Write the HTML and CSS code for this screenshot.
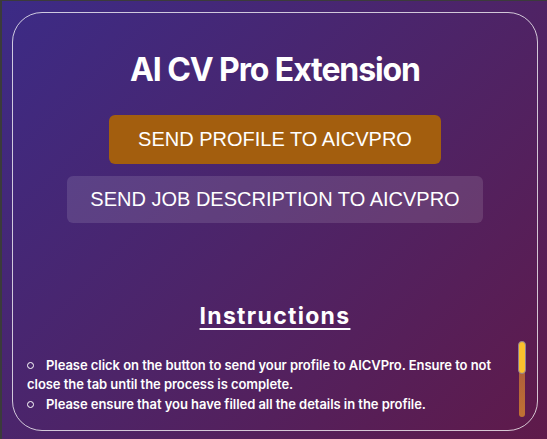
FILE: index.html
```html
<!DOCTYPE html>
<html lang="en">
<head>
<meta charset="utf-8">
<title>AI CV Pro Extension</title>
<link rel="stylesheet" href="styles.css">
</head>
<body>
<div class="frame">
  <main class="card">
    <h1 class="title">AI CV Pro Extension</h1>
    <button class="btn btn-profile">SEND PROFILE TO AICVPRO</button>
    <button class="btn btn-job">SEND JOB DESCRIPTION TO AICVPRO</button>
    <h2 class="subtitle">Instructions</h2>
    <div class="scroll">
      <ul class="steps">
        <li>Please click on the button to send your profile to AICVPro. Ensure to not close the tab until the process is complete.</li>
        <li>Please ensure that you have filled all the details in the profile.</li>
      </ul>
      <div class="scrollbar" aria-hidden="true"><div class="thumb"></div></div>
    </div>
  </main>
</div>
</body>
</html>
```
FILE: styles.css
```css
* { box-sizing: border-box; }
html, body { margin: 0; padding: 0; }
body { width: 547px; height: 439px; overflow: hidden; }

.frame {
  height: 439px;
  border-top: 1px solid #3b3b3b;
  border-left: 2px solid #3b3b3b;
  padding: 11px 9px 8px 10px;
  background: linear-gradient(135deg, #3c2b86 0%, #4d2468 50%, #5f1a4a 100%);
}

.card {
  height: 419px;
  border: 1px solid rgba(255, 255, 255, 0.75);
  border-radius: 30px;
  display: flex;
  flex-direction: column;
  align-items: center;
  color: #fff;
  font-family: Inter, "Noto Sans", sans-serif;
}

.title {
  margin: 41px 0 0;
  font-size: 32px;
  line-height: 32px;
  font-weight: 700;
  letter-spacing: -1.1px;
}

.btn {
  border: none;
  color: #fff;
  font-family: "Liberation Sans", Arial, sans-serif;
  font-size: 20px;
  line-height: 23px;
  border-radius: 6px;
  cursor: pointer;
}

.btn-profile {
  margin-top: 29px;
  padding: 13px 29px;
  background: #a35e0e;
}

.btn-job {
  margin-top: 12px;
  padding: 12px 23.5px;
  background: rgba(255, 255, 255, 0.12);
}

.subtitle {
  margin: 82px 0 0;
  font-size: 23px;
  line-height: 23px;
  font-weight: 700;
  letter-spacing: 1.3px;
  text-decoration: underline;
  text-decoration-thickness: 2px;
  text-underline-offset: 4px;
}

.scroll {
  position: relative;
  align-self: stretch;
  margin: 13px 10px 0 14px;
  height: 76px;
  overflow: hidden;
  padding-right: 10px;
}

.scrollbar {
  position: absolute;
  top: 0;
  right: 1px;
  width: 8px;
  height: 76px;
}
.scrollbar::before {
  content: "";
  position: absolute;
  left: 1px;
  right: 1px;
  top: 0;
  bottom: 0;
  border-radius: 3px;
  background: linear-gradient(180deg, rgba(220, 130, 50, 0.55), rgba(235, 150, 40, 0.7));
}
.thumb {
  position: relative;
  height: 33px;
  background: #fbc02d;
  border: 1px solid #8d7f99;
  border-radius: 4px;
}

.steps {
  list-style: none;
  margin: 0;
  padding: 14.5px 0 0;
  font-size: 13px;
  line-height: 19.5px;
  font-weight: 600;
  letter-spacing: -0.05px;
}

.steps li::before {
  content: "";
  display: inline-block;
  width: 5px;
  height: 5px;
  border: 1px solid #fff;
  border-radius: 50%;
  margin: 0 12px 0 0;
  vertical-align: middle;
}
```
